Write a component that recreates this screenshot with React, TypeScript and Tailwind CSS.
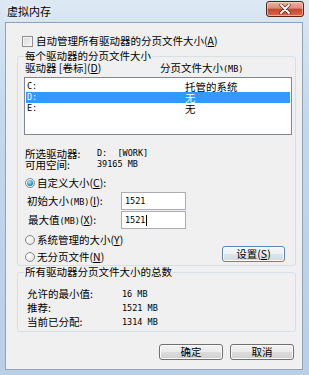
import React from "react";

const mono = "font-['DejaVu_Sans_Mono',monospace] text-[8.5px]";

function U({ c }: { c: string }) {
  return <span className="underline underline-offset-[1px]">{c}</span>;
}

function Radio({ checked }: { checked?: boolean }) {
  return (
    <span className="w-[10px] h-[10px] rounded-full border border-[#8a8a8a] bg-[radial-gradient(circle_at_35%_35%,#ffffff,#dcdcdc)] flex items-center justify-center shrink-0">
      {checked && (
        <span className="w-[6px] h-[6px] rounded-full bg-[radial-gradient(circle_at_40%_35%,#b4f0ff,#2a8fc9_60%,#1a5f95)]" />
      )}
    </span>
  );
}

function Btn({ children, w, blue }: { children: React.ReactNode; w: string; blue?: boolean }) {
  return (
    <div
      className={
        "h-[16px] rounded-[3px] border flex items-center justify-center leading-[12px] shadow-[inset_0_0_0_1px_#fbfbfb] " +
        w +
        (blue
          ? " border-[#5f86a8] bg-[linear-gradient(to_bottom,#f5f8fa_0%,#edf1f4_50%,#dde4ea_50%,#d3dbe2_100%)]"
          : " border-[#707070] bg-[linear-gradient(to_bottom,#f2f2f2_0%,#ebebeb_50%,#dddddd_50%,#cfcfcf_100%)]")
      }
    >
      {children}
    </div>
  );
}

export default function App() {
  return (
    <div className="w-[309px] h-[375px] flex flex-col bg-[linear-gradient(180deg,#dce8f3_0%,#c4d8eb_30%,#b9cfe5_100%)] font-['Noto_Sans_CJK_SC',sans-serif] text-[10.5px] text-black overflow-hidden">
      {/* title bar */}
      <div className="h-[22px] flex shrink-0">
        <div className="ml-[7px] h-[22px] flex items-center text-[11px] leading-[12px] [text-shadow:0_0_6px_#ffffff]">
          虚拟内存
        </div>
        <div className="ml-auto mr-[5px] mt-[1px] w-[38px] h-[16px] rounded-[3px] border border-[#5a2319] bg-[linear-gradient(to_bottom,#eab2a4_0%,#de8c78_45%,#c8442d_50%,#d66a4f_100%)] shadow-[inset_0_0_0_1px_rgba(255,220,210,0.6)] flex items-center justify-center">
          <svg width="12" height="10" viewBox="0 0 12 10">
            <path d="M2 1 L10 9 M10 1 L2 9" stroke="#5a2319" strokeWidth="3.2" strokeLinecap="round" />
            <path d="M2 1 L10 9 M10 1 L2 9" stroke="#ffffff" strokeWidth="1.8" strokeLinecap="round" />
          </svg>
        </div>
      </div>

      {/* client area */}
      <div className="ml-[5px] w-[298px] h-[348px] border border-[#8ea3ba] bg-[#f0f0f0] flex flex-col shrink-0">
        {/* checkbox row */}
        <div className="mt-[12px] ml-[16px] h-[12px] flex items-center leading-[12px]">
          <span className="w-[11px] h-[11px] border border-[#8f8f8f] bg-[linear-gradient(135deg,#d8d8d8,#f8f8f8)] shadow-[inset_0_0_0_1px_#f4f4f4] shrink-0" />
          <span className="ml-[3px]">
            自动管理所有驱动器的分页文件大小(<U c="A" />)
          </span>
        </div>

        {/* group 1 */}
        <fieldset className="mt-[3px] ml-[11px] w-[279px] border border-[#d5dfe5] rounded-[3px] pl-[6px] pb-[2px]">
          <legend className="px-[1px] leading-[12px]">每个驱动器的分页文件大小</legend>
          <div className="h-[12px] leading-[12px] flex items-center">
            <span className="ml-[1px] w-[135px]">
              驱动器 [卷标](<U c="D" />)
            </span>
            <span>
              分页文件大小<span className={mono}>(MB)</span>
            </span>
          </div>

          {/* list */}
          <div className="mt-[3px] w-[268px] h-[58px] border border-[#828790] bg-white pt-[3px] px-[1px]">
            <div className="h-[11px] flex items-center leading-[11px]">
              <span className={"w-[159px] pl-[1px] " + mono}>C:</span>
              <span>托管的系统</span>
            </div>
            <div className="h-[11px] flex items-center leading-[11px] bg-[#3399ff] text-white">
              <span className={"w-[159px] pl-[1px] " + mono}>D:</span>
              <span>无</span>
            </div>
            <div className="h-[11px] flex items-center leading-[11px]">
              <span className={"w-[159px] pl-[1px] " + mono}>E:</span>
              <span>无</span>
            </div>
          </div>

          {/* info */}
          <div className="mt-[13px] ml-[1px] h-[11px] flex items-center leading-[11px]">
            <span className="w-[72px]">所选驱动器:</span>
            <span className={mono + " whitespace-pre"}>D:  [WORK]</span>
          </div>
          <div className="ml-[1px] h-[11px] flex items-center leading-[11px]">
            <span className="w-[72px]">可用空间:</span>
            <span className={mono}>39165 MB</span>
          </div>

          <div className="mt-[7px] ml-[1px] h-[12px] flex items-center leading-[12px]">
            <Radio checked />
            <span className="ml-[2px]">
              自定义大小(<U c="C" />):
            </span>
          </div>

          <div className="mt-[3px] h-[18px] flex items-center leading-[12px]">
            <span className="ml-[3px] w-[94px]">
              初始大小<span className={mono}>(MB)</span>(<U c="I" />):
            </span>
            <div className="w-[65px] h-[18px] border border-[#abadb3] bg-white flex items-center pl-[3px]">
              <span className={mono}>1521</span>
            </div>
          </div>
          <div className="mt-[1px] h-[18px] flex items-center leading-[12px]">
            <span className="ml-[4px] w-[93px]">
              最大值<span className={mono}>(MB)</span>(<U c="X" />):
            </span>
            <div className="w-[65px] h-[18px] border border-[#abadb3] bg-white flex items-center pl-[3px]">
              <span className={mono}>1521</span>
              <span className="w-[1px] h-[11px] bg-black ml-[1px]" />
            </div>
          </div>

          <div className="mt-[5px] flex">
            <div className="w-[198px] flex flex-col gap-[5px]">
              <div className="ml-[1px] h-[12px] flex items-center leading-[12px]">
                <Radio />
                <span className="ml-[2px]">
                  系统管理的大小(<U c="Y" />)
                </span>
              </div>
              <div className="ml-[1px] h-[12px] flex items-center leading-[12px]">
                <Radio />
                <span className="ml-[2px]">
                  无分页文件(<U c="N" />)
                </span>
              </div>
            </div>
            <div className="mt-[12px]">
              <Btn w="w-[63px]" blue>
                <span>
                  设置(<U c="S" />)
                </span>
              </Btn>
            </div>
          </div>
        </fieldset>

        {/* group 2 */}
        <fieldset className="ml-[11px] w-[279px] border border-[#d5dfe5] rounded-[3px] pl-[6px] pb-[2px]">
          <legend className="px-[1px] leading-[12px]">所有驱动器分页文件大小的总数</legend>
          <div className="mt-[9px] flex flex-col">
            <div className="h-[14px] flex items-center leading-[14px]">
              <span className="ml-[3px] w-[95px]">允许的最小值:</span>
              <span className={mono}>16 MB</span>
            </div>
            <div className="h-[14px] flex items-center leading-[14px]">
              <span className="ml-[3px] w-[95px]">推荐:</span>
              <span className={mono}>1521 MB</span>
            </div>
            <div className="h-[14px] flex items-center leading-[14px]">
              <span className="ml-[3px] w-[95px]">当前已分配:</span>
              <span className={mono}>1314 MB</span>
            </div>
          </div>
        </fieldset>

        {/* bottom buttons */}
        <div className="mt-[12px] flex justify-end gap-[7px] pr-[8px]">
          <Btn w="w-[64px]">确定</Btn>
          <Btn w="w-[64px]">取消</Btn>
        </div>
      </div>
    </div>
  );
}
